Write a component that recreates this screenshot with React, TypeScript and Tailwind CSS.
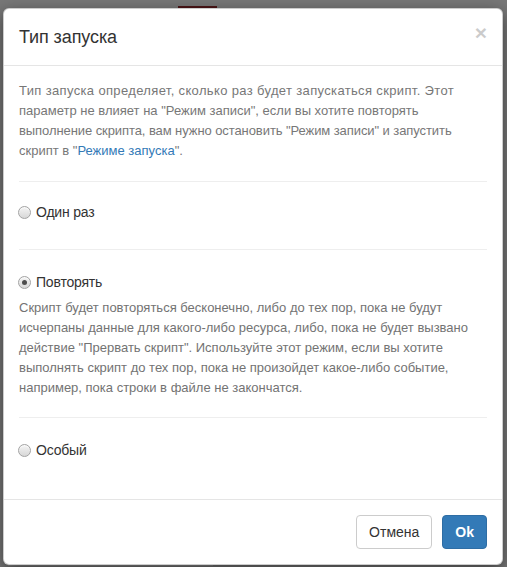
import { useState } from 'react'

const modes = [
  { id: 'once', label: 'Один раз' },
  { id: 'repeat', label: 'Повторять' },
  { id: 'custom', label: 'Особый' },
]

const repeatHelp = [
  'Скрипт будет повторяться бесконечно, либо до тех пор, пока не будут',
  'исчерпаны данные для какого-либо ресурса, либо, пока не будет вызвано',
  'действие "Прервать скрипт". Используйте этот режим, если вы хотите',
  'выполнять скрипт до тех пор, пока не произойдет какое-либо событие,',
  'например, пока строки в файле не закончатся.',
]

function Radio({ checked }: { checked: boolean }) {
  return (
    <span className="relative flex h-[13px] w-[13px] shrink-0 items-center justify-center rounded-full border border-[#a3a3a3] bg-gradient-to-b from-[#f4f4f4] to-[#d8d8d8] shadow-[inset_0_1px_1px_rgba(255,255,255,0.8)]">
      {checked && <span className="h-[5px] w-[5px] rounded-full bg-[#4d4d4d]" />}
    </span>
  )
}

export default function App() {
  const [mode, setMode] = useState('repeat')

  return (
    <div className="relative h-[567px] w-[507px] overflow-hidden bg-[#777777] pl-[3px] pt-[8px] font-['Liberation_Sans',Arial,sans-serif] text-[14px] leading-[20px]">
      {/* page behind the backdrop */}
      <div className="absolute left-[178px] top-[6px] h-[3px] w-[39px] bg-[#4a1416]" />
      <div className="absolute bottom-[1px] left-[8px] h-[2px] w-[205px] bg-[#8a8a8a]" />

      <div className="relative w-[500px] rounded-[6px] border border-black/20 bg-white shadow-[0_5px_15px_rgba(0,0,0,0.5)]">
        <div className="flex items-start justify-between border-b border-[#e5e5e5] p-[15px]">
          <h4 className="text-[18px] leading-[26px] tracking-[-0.1px] text-[#333333]">Тип запуска</h4>
          <button className="-mt-[2px] text-[21px] font-bold leading-none text-black opacity-20">×</button>
        </div>

        <div className="p-[15px] text-[#777777]">
          <p className="whitespace-nowrap text-[13px]">
            <span className="tracking-[0.35px]">Тип запуска определяет, сколько раз будет запускаться скрипт. Этот</span>
            <br />
            параметр не влияет на "Режим записи", если вы хотите повторять
            <br />
            <span className="tracking-[-0.08px]">выполнение скрипта, вам нужно остановить "Режим записи" и запустить</span>
            <br />
            скрипт в "<a className="text-[#337ab7]">Режиме запуска</a>".
          </p>

          <hr className="mt-[20px] border-[#eeeeee]" />
          <label className="-ml-px mt-[20px] flex cursor-pointer items-center gap-[5px] tracking-[-0.2px] text-[#333333]" onClick={() => setMode(modes[0].id)}>
            <Radio checked={mode === modes[0].id} />
            {modes[0].label}
          </label>

          <hr className="mt-[27px] border-[#eeeeee]" />
          <label className="-ml-px mt-[22px] flex cursor-pointer items-center gap-[5px] tracking-[-0.2px] text-[#333333]" onClick={() => setMode(modes[1].id)}>
            <Radio checked={mode === modes[1].id} />
            {modes[1].label}
          </label>
          <p className="mt-[6px] whitespace-nowrap text-[13px] text-[#737373]">
            {repeatHelp.map((line) => (
              <span key={line} className="block">
                {line}
              </span>
            ))}
          </p>

          <hr className="mt-[19px] border-[#eeeeee]" />
          <label className="-ml-px mb-[24px] mt-[22px] flex cursor-pointer items-center gap-[5px] tracking-[-0.2px] text-[#333333]" onClick={() => setMode(modes[2].id)}>
            <Radio checked={mode === modes[2].id} />
            {modes[2].label}
          </label>
        </div>

        <div className="flex justify-end gap-[10px] border-t border-[#e5e5e5] p-[15px]">
          <button className="h-[34px] rounded-[4px] border border-[#cccccc] bg-white px-[12px] text-[#333333]">Отмена</button>
          <button className="h-[34px] rounded-[4px] border border-[#2e6da4] bg-[#337ab7] px-[12px] font-bold text-white">Ok</button>
        </div>
      </div>
    </div>
  )
}
